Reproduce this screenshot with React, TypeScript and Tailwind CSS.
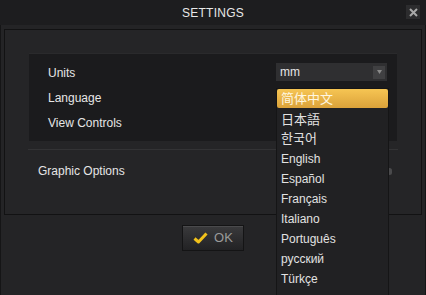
import React from "react";

const languages = [
  { label: "日本語", h: "h-[18px]" },
  { label: "한국어", h: "h-[19px]" },
  { label: "English", h: "h-[21px]" },
  { label: "Español", h: "h-[20px]" },
  { label: "Français", h: "h-[20px]" },
  { label: "Italiano", h: "h-[20px]" },
  { label: "Português", h: "h-[20px]" },
  { label: "русский", h: "h-[20px]" },
  { label: "Türkçe", h: "h-[20px]" },
];

export default function App() {
  return (
    <div
      className="relative w-[426px] h-[295px] overflow-hidden bg-[#242426] text-[12px] text-[#e6e6e6]"
      style={{ fontFamily: '"Liberation Sans", "Noto Sans CJK SC", sans-serif' }}
    >
      {/* Title bar */}
      <div className="relative h-[25px] bg-[#1d1d1f] flex items-center justify-center">
        <span className="text-[12px] text-[#e8e8e8] tracking-[0.02em]">SETTINGS</span>
        <button className="absolute right-[6px] top-[5px] w-[14px] h-[14px] bg-[#2c2c2e] flex items-center justify-center">
          <svg width="9" height="9" viewBox="0 0 9 9">
            <path d="M1 1L8 8M8 1L1 8" stroke="#a9a9a9" strokeWidth="2" />
          </svg>
        </button>
      </div>

      {/* Body */}
      <div className="h-[270px] border-l border-r border-[#151516] px-[3px] pt-[4px] flex flex-col">
        <div className="h-[186px] border border-[#121213] bg-[#252527] flex flex-col pt-[23px]">
          <div className="mx-[24px] h-[88px] bg-[#1b1b1d] border-t border-[#2a2a2c] flex flex-col pl-[19px] pt-[6px]">
            <div className="h-[25px] flex items-center">Units</div>
            <div className="h-[25px] flex items-center">Language</div>
            <div className="h-[25px] flex items-center">View Controls</div>
          </div>
          <div className="mx-[23px] mt-[8px] h-px bg-[#333335]" />
          <div className="h-[42px] pl-[33px] pr-[29px] flex items-center justify-between">
            <span>Graphic Options</span>
            <span className="w-[5px] h-[7px] rounded-full bg-[#4a4a4c]" />
          </div>
        </div>

        <div className="flex justify-center pt-[10px]">
          <button className="w-[62px] h-[26px] border border-[#141415] bg-gradient-to-b from-[#3a3a3c] to-[#222224] flex items-center justify-center gap-[6px] shadow-[inset_0_1px_0_#4a4a4c]">
            <svg width="15" height="12" viewBox="0 0 15 12">
              <path d="M1.5 6.5L5.5 10L13.5 1.5" stroke="#f2c21b" strokeWidth="3" fill="none" strokeLinejoin="round" />
            </svg>
            <span className="text-[13px] text-[#9a9a9a]">OK</span>
          </button>
        </div>
      </div>

      {/* Units select */}
      <div className="absolute left-[276px] top-[63px] w-[111px] h-[18px] bg-[#2f2f31] flex items-center justify-between pl-[4px] pr-[2px]">
        <span className="text-[#e6e6e6]">mm</span>
        <span className="w-[12px] h-[13px] bg-[#404042] flex items-center justify-center">
          <svg width="5" height="4" viewBox="0 0 5 4">
            <path d="M0 0H5L2.5 4Z" fill="#8a8a8a" />
          </svg>
        </span>
      </div>

      {/* Language dropdown */}
      <div className="absolute left-[276px] top-[88px] w-[113px] h-[220px] bg-[#212123] border border-[#151516] flex flex-col">
        <div className="h-[19px] mb-[3px] rounded-[2px] bg-gradient-to-b from-[#f6c553] to-[#dba23a] flex items-center pl-[4px] text-[#fff7e0] text-[13px]">
          简体中文
        </div>
        {languages.map((l) => (
          <div key={l.label} className={`${l.h} flex items-center pl-[4px] text-[#e2e2e2] ${l.label === "日本語" || l.label === "한국어" ? "text-[13px]" : "text-[12px]"}`}>
            {l.label}
          </div>
        ))}
      </div>
    </div>
  );
}
